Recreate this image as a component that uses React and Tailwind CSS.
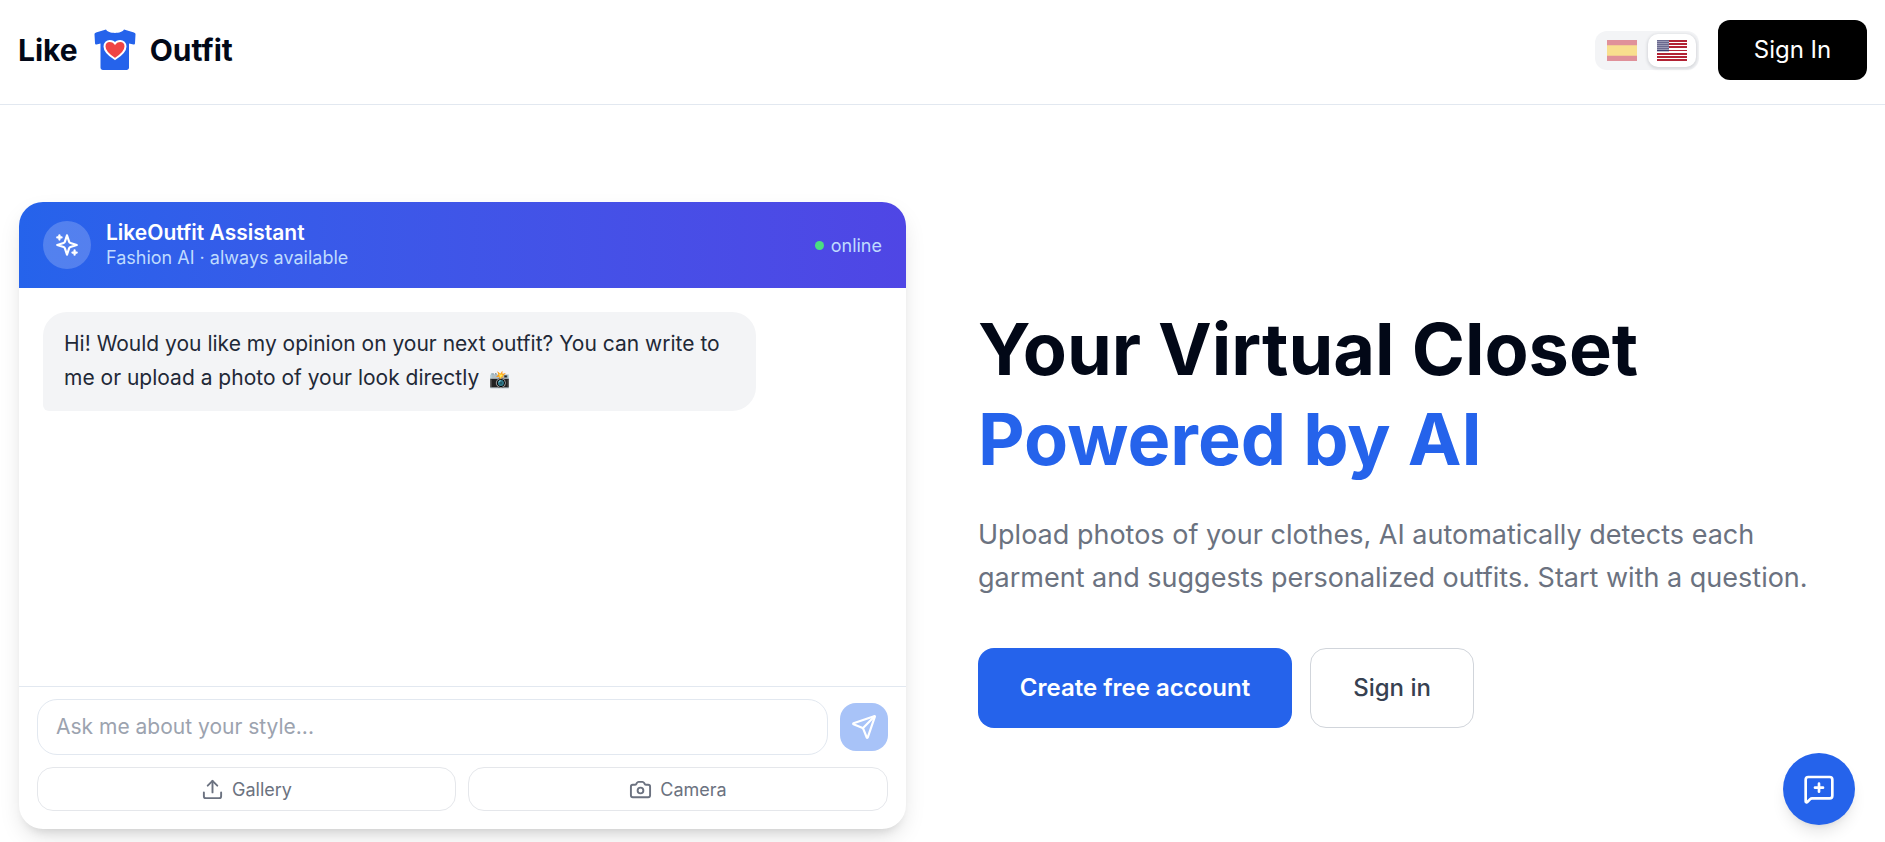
import { Send, Upload, Camera, MessageSquarePlus } from "lucide-react";

function Shirt() {
  return (
    <svg width="42" height="42" viewBox="0 0 42 42" className="ml-[2px] shrink-0">
      <path
        d="M12 0.500 C14 5 28 5 30 0.500 L40 3.500 C41 4 41.500 4.500 41.500 5.500 L41 14 C41 15 40.500 15.500 39.500 15.500 L35 14.500 L35 38.500 C35 40 34 41 32.500 41 L9 41 C7.500 41 6.500 40 6.500 38.500 L6.500 14.500 L2.500 15.500 C1.500 15.500 1 15 1 14 L0.500 5.500 C0.500 4.500 1 4 2 3.500 Z"
        fill="#2563eb"
      />
      <path
        d="M21 30 C17 27.500 10.500 23 10.500 17.500 C10.500 14 13 12 15.800 12 C18 12 20 13 21 14.500 C22 13 24 12 26.200 12 C29 12 31.500 14 31.500 17.500 C31.500 23 25 27.500 21 30 Z"
        fill="#ef4444"
        stroke="#ffffff"
        strokeWidth="2"
      />
    </svg>
  );
}

function FlagEs() {
  return (
    <svg width="30" height="21" viewBox="0 0 30 21" className="opacity-[0.42]">
      <rect width="30" height="21" fill="#c60b1e" />
      <rect y="5.250" width="30" height="10.500" fill="#ffc400" />
    </svg>
  );
}

function FlagUs() {
  const stripes = [0, 2, 4, 6, 8, 10, 12];
  return (
    <svg width="30" height="21" viewBox="0 0 30 21">
      <rect width="30" height="21" fill="#ffffff" />
      {stripes.map((s) => (
        <rect key={s} y={s * 1.615} width="30" height="1.615" fill="#b22234" shapeRendering="crispEdges" />
      ))}
      <rect width="12" height="11.300" fill="#3c3b6e" />
      {[1.2, 3.2, 5.2, 7.2, 9.2].map((y) =>
        [1, 3, 5, 7, 9, 11].map((x) => (
          <rect key={`${x}-${y}`} x={x - 0.6} y={y - 0.6} width="1.200" height="1.200" fill="#ffffff" />
        ))
      )}
    </svg>
  );
}

function OldSparkles() {
  return (
    <svg width="26" height="26" viewBox="0 0 24 24" fill="none" stroke="#ffffff" strokeWidth="2" strokeLinecap="round" strokeLinejoin="round">
      <path d="m12 3-1.912 5.813a2 2 0 0 1-1.275 1.275L3 12l5.813 1.912a2 2 0 0 1 1.275 1.275L12 21l1.912-5.813a2 2 0 0 1 1.275-1.275L21 12l-5.813-1.912a2 2 0 0 1-1.275-1.275L12 3Z" />
      <path d="M5 3v4" />
      <path d="M19 17v4" />
      <path d="M3 5h4" />
      <path d="M17 19h4" />
    </svg>
  );
}

export default function App() {
  return (
    <div className="relative h-[842px] overflow-hidden bg-white font-['Inter',sans-serif] text-[#0f172a]">
      <header className="flex h-[105px] items-center justify-between border-b border-[#e2e8f0] pb-1 pl-[18px] pr-[18px]">
        <div className="flex items-center gap-[14px] text-[30px] font-bold leading-none text-[#020817]">
          <span>Like</span>
          <Shirt />
          <span>Outfit</span>
        </div>
        <div className="flex items-center gap-[19px]">
          <div className="flex h-[39px] w-[104px] items-center justify-between rounded-xl bg-[#f3f4f6] p-[3px]">
            <span className="flex h-[33px] w-[48px] items-center justify-center">
              <FlagEs />
            </span>
            <span className="flex h-[33px] w-[48px] items-center justify-center rounded-[10px] bg-white shadow-[0_1px_3px_1px_rgba(15,23,42,0.12)]">
              <FlagUs />
            </span>
          </div>
          <button className="flex h-[60px] w-[149px] items-center justify-center rounded-xl bg-black text-[24px] font-normal text-white">
            Sign In
          </button>
        </div>
      </header>

      <main className="flex items-start gap-[72px] pl-[19px] pr-[19px] pt-[97px]">
        <section className="flex h-[627px] w-[887px] shrink-0 flex-col overflow-hidden rounded-3xl bg-white shadow-[0_10px_25px_-5px_rgba(0,0,0,0.15),0_8px_10px_-6px_rgba(0,0,0,0.1)]">
          <div className="flex h-[86px] shrink-0 items-center justify-between bg-gradient-to-r from-[#2563eb] to-[#4f46e5] pl-6 pr-6">
            <div className="flex items-center gap-[15px]">
              <div className="flex h-12 w-12 items-center justify-center rounded-full bg-white/20">
                <OldSparkles />
              </div>
              <div>
                <div className="text-[21px] font-semibold leading-[26px] text-white">LikeOutfit Assistant</div>
                <div className="text-[18px] leading-[24px] text-[#bfdbfe]">Fashion AI · always available</div>
              </div>
            </div>
            <div className="flex items-center gap-[7px] text-[18px] text-[#bfdbfe]">
              <span className="h-[9px] w-[9px] rounded-full bg-[#4ade80]" />
              online
            </div>
          </div>

          <div className="flex-1 px-6 pt-6">
            <div className="w-[713px] rounded-3xl rounded-bl-[6px] bg-[#f3f4f6] px-[21px] py-[15px] text-[21px] leading-[34px] text-[#1f2937]">
              Hi! Would you like my opinion on your next outfit? You can write to me or upload a photo of your look directly <span className="ml-1 text-[17px]">📸</span>
            </div>
          </div>

          <div className="border-t border-[#e2e8f0] px-[18px] pb-[18px] pt-3">
            <div className="flex items-center gap-3">
              <div className="flex h-[56px] flex-1 items-center rounded-[20px] border border-[#e2e8f0] px-[18px] text-[21px] text-[#9ca3af]">
                Ask me about your style...
              </div>
              <div className="flex h-12 w-12 shrink-0 items-center justify-center rounded-2xl bg-[#a8c3f8]">
                <Send size={26} strokeWidth={2} className="text-white" />
              </div>
            </div>
            <div className="mt-3 flex gap-3">
              <div className="flex h-[44px] w-[419px] items-center justify-center gap-2 rounded-2xl border border-[#e5e7eb] text-[18px] text-[#6b7280]">
                <Upload size={23} strokeWidth={2} />
                Gallery
              </div>
              <div className="flex h-[44px] flex-1 items-center justify-center gap-2 rounded-2xl border border-[#e5e7eb] text-[18px] text-[#6b7280]">
                <Camera size={23} strokeWidth={2} />
                Camera
              </div>
            </div>
          </div>
        </section>

        <section className="pt-[102px]">
          <h1 className="text-[72px] font-bold leading-[90px] text-[#020817]">
            Your Virtual Closet
            <br />
            <span className="text-[#2563eb]">Powered by AI</span>
          </h1>
          <p className="mt-[29px] w-[850px] text-[27px] leading-[43px] text-[#6b7280]">
            Upload photos of your clothes, AI automatically detects each garment and suggests personalized outfits. Start with a question.
          </p>
          <div className="mt-[49px] flex gap-[18px]">
            <button className="flex h-[80px] w-[314px] items-center justify-center rounded-2xl bg-[#2563eb] text-[24px] font-semibold text-white">
              Create free account
            </button>
            <button className="flex h-[80px] w-[164px] items-center justify-center rounded-2xl border border-[#d1d5db] text-[24px] font-medium text-[#374151]">
              Sign in
            </button>
          </div>
        </section>
      </main>

      <div className="absolute bottom-[17px] right-[30px] flex h-[72px] w-[72px] items-center justify-center rounded-full bg-[#2563eb] shadow-[0_10px_15px_-3px_rgba(0,0,0,0.1),0_4px_6px_-4px_rgba(0,0,0,0.1)]">
        <MessageSquarePlus size={32} strokeWidth={2} className="text-white" />
      </div>
    </div>
  );
}
